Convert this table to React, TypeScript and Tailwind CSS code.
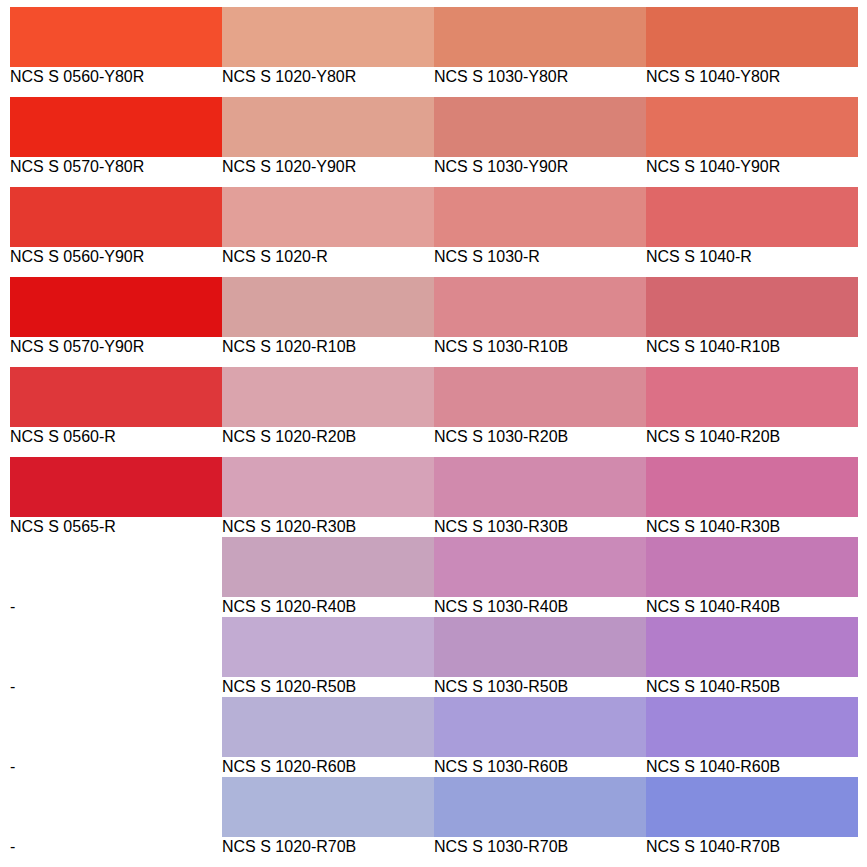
const ROWS: { tall: boolean; cells: ([string, string] | null)[] }[] = [
  { tall: true, cells: [["#F44E2C", "NCS S 0560-Y80R"], ["#E5A48A", "NCS S 1020-Y80R"], ["#E0886B", "NCS S 1030-Y80R"], ["#E06B4E", "NCS S 1040-Y80R"]] },
  { tall: true, cells: [["#EB2616", "NCS S 0570-Y80R"], ["#E0A290", "NCS S 1020-Y90R"], ["#D98276", "NCS S 1030-Y90R"], ["#E4705B", "NCS S 1040-Y90R"]] },
  { tall: true, cells: [["#E5392F", "NCS S 0560-Y90R"], ["#E29F99", "NCS S 1020-R"], ["#E08883", "NCS S 1030-R"], ["#E06767", "NCS S 1040-R"]] },
  { tall: true, cells: [["#DF1112", "NCS S 0570-Y90R"], ["#D6A2A0", "NCS S 1020-R10B"], ["#DC888E", "NCS S 1030-R10B"], ["#D3676F", "NCS S 1040-R10B"]] },
  { tall: true, cells: [["#DE373A", "NCS S 0560-R"], ["#DAA4AD", "NCS S 1020-R20B"], ["#D98A96", "NCS S 1030-R20B"], ["#DC7086", "NCS S 1040-R20B"]] },
  { tall: false, cells: [["#D71A2A", "NCS S 0565-R"], ["#D6A2B8", "NCS S 1020-R30B"], ["#D18AAD", "NCS S 1030-R30B"], ["#D16E9E", "NCS S 1040-R30B"]] },
  { tall: false, cells: [null, ["#C8A3BD", "NCS S 1020-R40B"], ["#CA8AB9", "NCS S 1030-R40B"], ["#C479B5", "NCS S 1040-R40B"]] },
  { tall: false, cells: [null, ["#C2ABD2", "NCS S 1020-R50B"], ["#BB95C4", "NCS S 1030-R50B"], ["#B37DCA", "NCS S 1040-R50B"]] },
  { tall: false, cells: [null, ["#B7B0D6", "NCS S 1020-R60B"], ["#A99DDA", "NCS S 1030-R60B"], ["#9F87DA", "NCS S 1040-R60B"]] },
  { tall: false, cells: [null, ["#ADB5DA", "NCS S 1020-R70B"], ["#97A2DB", "NCS S 1030-R70B"], ["#838DDF", "NCS S 1040-R70B"]] },
];

function Cell({ cell }: { cell: [string, string] | null }) {
  return (
    <div className="flex flex-col">
      {cell ? (
        <div className="h-[60px] w-[212px]" style={{ backgroundColor: cell[0] }} />
      ) : (
        <div className="h-[60px] w-[212px]" />
      )}
      <div className="pt-[1px] text-[16px] leading-[18px] text-black">{cell ? cell[1] : "-"}</div>
    </div>
  );
}

export default function App() {
  return (
    <div className="min-h-screen bg-white pl-[10px] pt-[7px] font-['Liberation_Sans',Arial,sans-serif]">
      {ROWS.map((row, i) => (
        <div key={i} className={`grid grid-cols-[repeat(4,212px)] ${row.tall ? "h-[90px]" : "h-[80px]"}`}>
          {row.cells.map((c, j) => (
            <Cell key={j} cell={c} />
          ))}
        </div>
      ))}
    </div>
  );
}
